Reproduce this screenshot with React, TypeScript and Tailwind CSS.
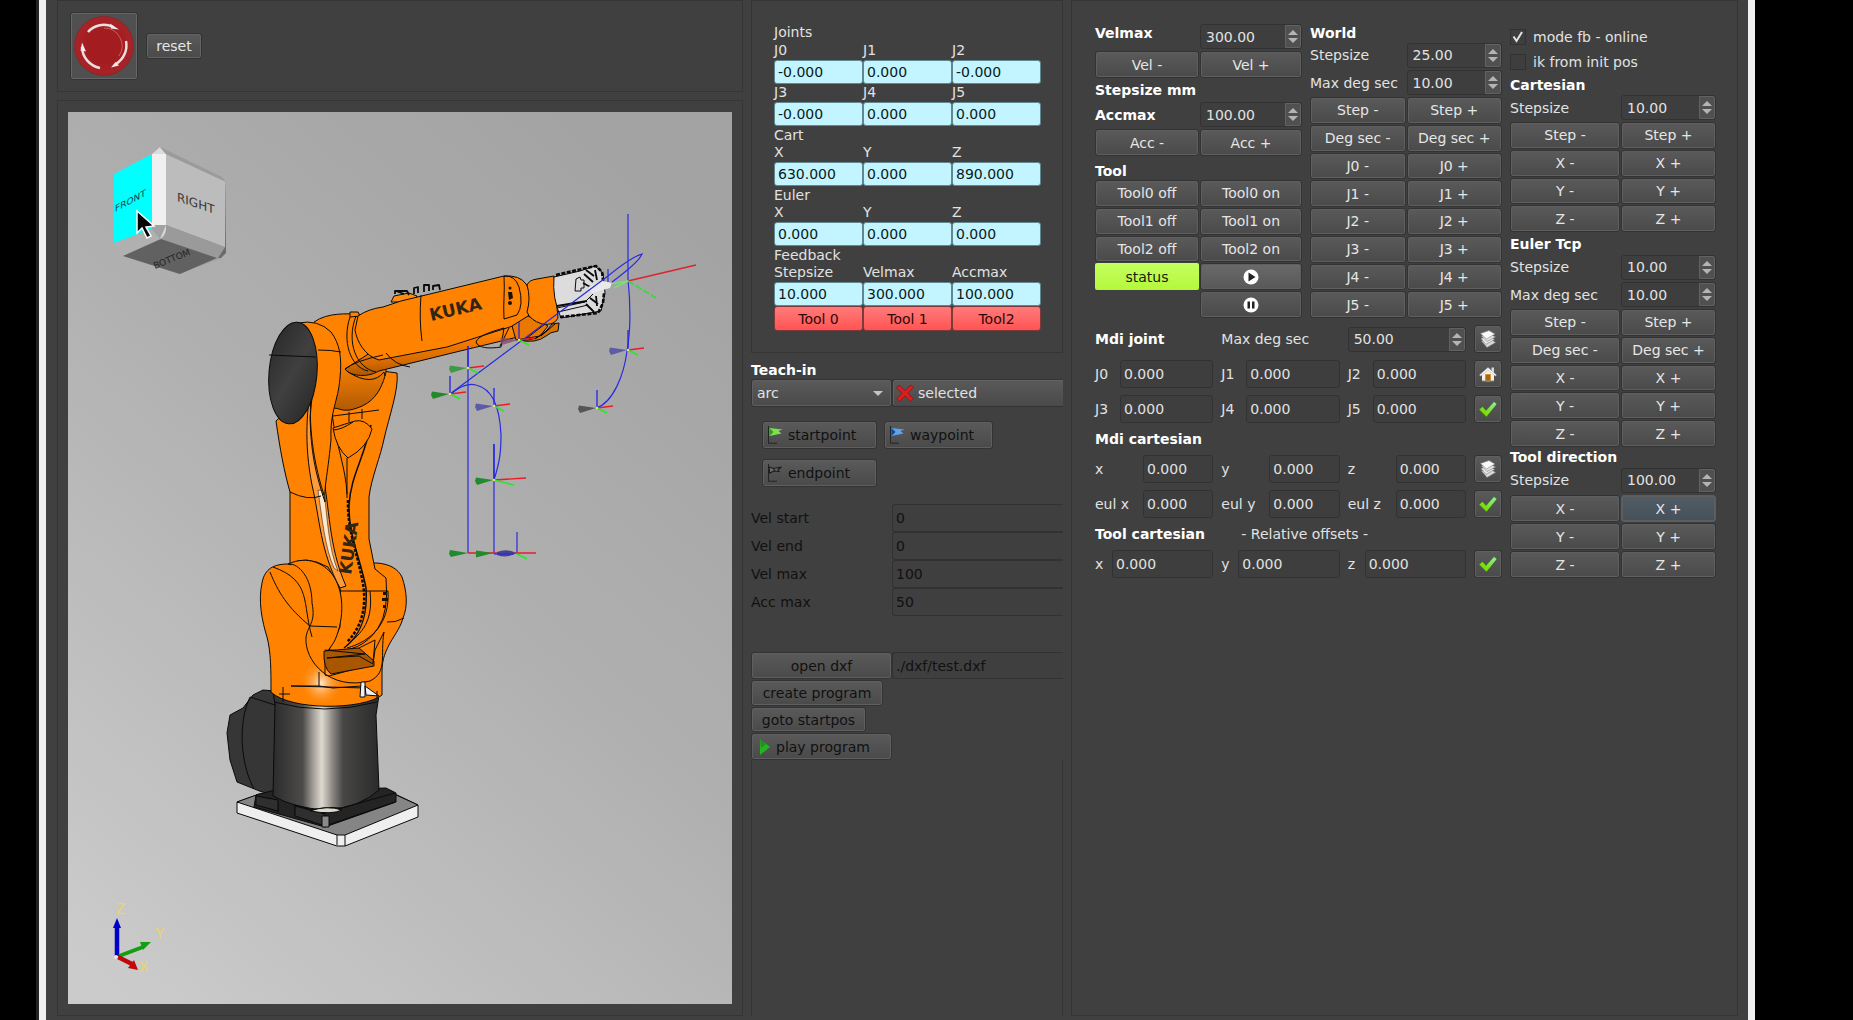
import type { ReactNode } from "react";

const btn =
  "flex w-full min-w-0 items-center justify-center whitespace-nowrap rounded-[3px] border border-[#333333] bg-linear-to-b from-[#5a5a5a] to-[#4a4a4a] leading-none shadow-[inset_0_0_0_1px_#5f5f5f]";
const field = "w-full min-w-0 rounded-[3px] border border-[#323232] bg-[#3e3e3e] leading-none outline-none";

function Btn({ children, className = "h-full text-[#e6e6e6]", label }: { children: ReactNode; className?: string; label?: string }) {
  return (
    <button type="button" aria-label={label} className={`${btn} ${className}`}>
      {children}
    </button>
  );
}

function Title({ children, className = "h-[18px]" }: { children: ReactNode; className?: string }) {
  return <h2 className={`flex items-center whitespace-nowrap font-bold text-white ${className}`}>{children}</h2>;
}

function Spin({ value, label }: { value: string; label: string }) {
  return (
    <div className="flex h-[25px] w-full min-w-0 rounded-[3px] border border-[#323232] bg-[#3e3e3e]">
      <input aria-label={label} defaultValue={value} className="w-full min-w-0 flex-1 bg-transparent pl-[5px] leading-none outline-none" />
      <div className="flex w-4 shrink-0 flex-col items-center justify-center gap-[3px] rounded-r-[2px] border border-[#626262] bg-[#505050]">
        <button type="button" aria-label={`Increase ${label}`} className="flex">
          <svg width="10" height="5" viewBox="0 0 10 5">
            <path d="M0 5 5 0l5 5z" fill="#b4b4b4" />
          </svg>
        </button>
        <button type="button" aria-label={`Decrease ${label}`} className="flex">
          <svg width="10" height="5" viewBox="0 0 10 5">
            <path d="M0 0h10L5 5z" fill="#b4b4b4" />
          </svg>
        </button>
      </div>
    </div>
  );
}

function Readouts({ labels, values }: { labels: string[]; values: string[] }) {
  return (
    <div className="grid grid-cols-3">
      {labels.map((l, i) => (
        <label key={l} className="block">
          <span className="block h-[18px] leading-[17px]">{l}</span>
          <input
            readOnly
            value={values[i]}
            className="block h-6 w-full min-w-0 rounded-[3px] border border-[#5f8890] bg-[#c2f5ff] pl-[3px] leading-none text-[#0b1a20] outline-none"
          />
        </label>
      ))}
    </div>
  );
}

function Labelled({ label, value, labelClass }: { label: string; value: string; labelClass: string }) {
  return (
    <label className="flex min-w-0 items-center">
      <span className={`shrink-0 whitespace-nowrap ${labelClass}`}>{label}</span>
      <input defaultValue={value} className={`${field} h-7 flex-1 pl-[3px]`} />
    </label>
  );
}

function Layers() {
  return (
    <svg width="18" height="18" viewBox="0 0 18 18">
      <g stroke="#7d7d7d" strokeWidth=".6" strokeLinejoin="round">
        <path d="M2.500 11 11 8.500l5.500 4-8.500 5z" fill="#dadada" />
        <path d="M2 8.500 10 6l5.500 3.500-8.500 5z" fill="#e8e8e8" />
        <path d="M2.500 6 11 4l5.500 3-8.500 4.500z" fill="#e2e2e2" />
        <path d="M1.500 3.500 10 .5l6 3.500-8.500 5z" fill="#f8f8f8" />
      </g>
    </svg>
  );
}
function Home() {
  return (
    <svg width="18" height="18" viewBox="0 0 18 18">
      <path d="M12.500 2.500h2.500v5h-2.500z" fill="#d8d8d8" />
      <path d="M3 8.500 9 4l6 4.500V16H3z" fill="#f1efea" />
      <path d="M6.500 9.500h5V16h-5z" fill="#a9650f" stroke="#d8912c" />
      <path d="M.5 10 9 2.500 17.500 10l-1.200 1L9 5l-7.300 6z" fill="#fafafa" stroke="#aaa" strokeWidth=".5" />
      <path d="M3 16h12" stroke="#888" />
    </svg>
  );
}
function Check() {
  return (
    <svg width="20" height="18" viewBox="0 0 20 18">
      <defs>
        <linearGradient id="chk" x1="0" y1="1" x2="1" y2="0">
          <stop offset=".3" stopColor="#7ddc08" />
          <stop offset=".8" stopColor="#8fe68f" />
        </linearGradient>
      </defs>
      <path d="M1 9.500 4.500 6.500l3.500 4L16 1.500l3 2.500L8.500 17z" fill="url(#chk)" stroke="#2f6f1a" strokeWidth=".6" />
    </svg>
  );
}
function Flag({ light, dark, disabled = false }: { light: string; dark: string; disabled?: boolean }) {
  return (
    <svg width="18" height="18" viewBox="0 0 18 18" className="shrink-0">
      <path d="M2.500 0v17M2 17.200h9" stroke="#242424" fill="none" />
      {disabled ? (
        <path d="M3 3l4.500 1.500 8-1.500-3.500 2.500 1 2-5-.5L3.500 9zM7 4l2 3" fill="#6a6a6a" stroke="#1c1c1c" strokeWidth="1.200" />
      ) : (
        <>
          <path d="M3.500 2 16.500 3.500l-4 1.500 3 2.500L3.500 10z" fill={light} />
          <path d="M3.500 2v8l4-4z" fill={dark} />
        </>
      )}
    </svg>
  );
}

function EmergencyStop() {
  return (
    <svg width="62" height="62" viewBox="0 0 62 62">
      <defs>
        <radialGradient id="stop">
          <stop offset=".7" stopColor="#a51f22" />
          <stop offset=".94" stopColor="#a82328" />
          <stop offset="1" stopColor="#7c2a2a" />
        </radialGradient>
      </defs>
      <circle cx="31" cy="31" r="30" fill="url(#stop)" />
      <circle cx="31" cy="31" r="18" fill="#a31c20" />
      <path d="M31 13a18 18 0 0 1 15 28" fill="none" stroke="#c9605f" strokeWidth="1" />
      <g fill="none" stroke="#ecdfdf" strokeWidth="2.500">
        <path d="M15 17a21 21 0 0 1 25-5" />
        <path d="M53 26a22 22 0 0 1-10 23" />
        <path d="M27 53A22 22 0 0 1 9 32" />
      </g>
      <g fill="#f5eaea">
        <path d="M46 14.500 37 8.500l1 5z" />
        <path d="M38 52.500l4.500-5.500 3.500 3.500z" />
        <path d="M9 27.500l4 9-5.500-1z" />
      </g>
    </svg>
  );
}

function Frame3({ x, y, c, s = 1, z = 22, o = 1 }: { x: number; y: number; c: string; s?: number; z?: number; o?: number }) {
  return (
    <g>
      <path d={`M${x} ${y}v${-z}`} stroke="#2222e8" strokeWidth="1.300" />
      <path d={`M${x} ${y}l${16 * s} -2`} stroke="#ea1c24" strokeWidth="1.400" />
      <path d={`M${x} ${y}l${10 * s} ${5}`} stroke="#25e825" strokeWidth="1.500" />
      <path d={`M${x - 1} ${y}l-17-2.500-1 3.500 2 4z`} fill={c} opacity={o} />
      <circle cx={x} cy={y} r="1.200" fill="#f3e85a" />
    </g>
  );
}

function RobotView() {
  return (
    <svg viewBox="68 112 664 892" className="block h-auto w-full" role="img" aria-label="Robot view" fontFamily="'DejaVu Sans', sans-serif">
      <defs>
        <linearGradient id="bg" x1=".1" y1="1" x2=".75" y2="0">
          <stop offset="0" stopColor="#cbcbcb" />
          <stop offset=".55" stopColor="#b0b0b0" />
          <stop offset="1" stopColor="#a3a3a3" />
        </linearGradient>
        <linearGradient id="cyl">
          <stop offset="0" stopColor="#2c2c2c" />
          <stop offset=".28" stopColor="#4d4b49" />
          <stop offset=".38" stopColor="#a39f98" />
          <stop offset=".46" stopColor="#dedad2" />
          <stop offset=".56" stopColor="#8c8984" />
          <stop offset=".66" stopColor="#484746" />
          <stop offset="1" stopColor="#2b2b2b" />
        </linearGradient>
        <linearGradient id="arm" x1="0" y1="0" x2=".12" y2="1">
          <stop offset=".6" stopColor="#ff8200" />
          <stop offset=".85" stopColor="#d96c00" />
          <stop offset="1" stopColor="#a95500" />
        </linearGradient>
        <linearGradient id="elbow" x1="0" y1="0" x2="0" y2="1">
          <stop offset=".5" stopColor="#ff8200" />
          <stop offset="1" stopColor="#b05a04" />
        </linearGradient>
        <linearGradient id="cap" x1="0" y1="0" x2="1" y2="1">
          <stop offset="0" stopColor="#272727" />
          <stop offset=".5" stopColor="#404040" />
          <stop offset="1" stopColor="#262626" />
        </linearGradient>
        <radialGradient id="shine">
          <stop offset="0" stopColor="#ffe9cf" />
          <stop offset="1" stopColor="#ff8200" stopOpacity="0" />
        </radialGradient>
      </defs>
      <rect x="68" y="112" width="664" height="892" fill="url(#bg)" />

      {/* orientation cube */}
      <g>
        <path d="M152 154l8-7 62 31 4 7v66l-6 8-42 15-54-18-10-15z" fill="#a2a2a2" />
        <path d="M114 174l38-20v75l-38 14z" fill="#00ffff" />
        <path d="M152 154h14v71h-14z" fill="#f0f0f0" />
        <path d="M152 154l8-7 6 7z" fill="#dcdcdc" />
        <path d="M166 154l59 27v66l-59-22z" fill="#bcbcbc" />
        <path d="M160 147l62 30 4 5-60-28z" fill="#9b9b9b" />
        <path d="M166 225l59 22-7 11-58-19z" fill="#9a9a9a" />
        <path d="M114 243l38-14 8 10-37 17z" fill="#b0b0b0" />
        <path d="M160 239l6-14q1 10-6 14z" fill="#d6d6d6" />
        <path d="M123 256l38-17 56 19-37 16z" fill="#616161" />
        <path d="M225 184v63l-7 11h3l5-5z" fill="#6b6b6b" />
        <text transform="translate(115 212) skewY(-28)" fontSize="9" fill="#12454a">FRONT</text>
        <text transform="translate(177 201) skewY(19)" fontSize="12" fill="#383838">RIGHT</text>
        <text transform="translate(155 269) rotate(-22)" fontSize="9" fill="#262626">BOTTOM</text>
        <path d="M137 211v22l5-5 5 10 4-2-5-9 8-1z" fill="#050505" stroke="#fff" strokeWidth="1.500" />
      </g>

      <g stroke="#0a0a0a" strokeWidth="1" strokeLinejoin="round">
        {/* base plate */}
        <path d="M237 802l20-7 140 0 21 10v12l-73 29h-8l-100-33z" fill="#efefef" />
        <path d="M237 802l22-8 135 0 24 11-73 30h-8z" fill="#858585" />
        <path d="M337 835v10M345 835v11" fill="none" />
        {/* connector box */}
        <path d="M275 691l-12-1-10 5-10 13-13 7-3 18 3 27 7 22 25 10 20 3z" fill="#363636" />
        <path d="M250 697c-12 25-10 66 4 92M250 697l25 8" fill="none" />
        {/* pedestal */}
        <path d="M256 795l15-4 115-3 10 5v9l-71 25-71-20z" fill="#242424" />
        <path d="M273 692q52 18 106 3l-3 20 3 75q-20 18-53 20-32-2-53-14l2-91z" fill="url(#cyl)" />
        <path d="M256 796l22 7v10M295 805l29 8v13M324 813l71-20M295 805v10l30 11 70-24M305 812q18-6 36-4" fill="none" />
        <path d="M256 796l22 4v11l-22-6z M295 806l30 8v12l-30-10z" fill="#2f2f2f" />
        <path d="M322 816h7v11h-7z" fill="#8a8a8a" />
        <path d="M310 811q17-6 32-1-10 5-32 1z" fill="#ddd9cf" />
        <path d="M274 702q50 14 103 0" fill="none" />
        {/* shoulder */}
        <path d="M288 564c-18 0-24 8-26 19-4 18 0 38 5 54 4 15 4 34 4 55 20 19 92 18 111 3v-23c0-14 4-21 8-29 6-10 11-17 13-25 5-12 4-26-1-41-4-8-12-13-25-14z" fill="#ff8200" />
        <ellipse cx="321" cy="683" rx="22" ry="24" fill="url(#shine)" stroke="none" />
        {/* lower arm */}
        <path d="M276 421c4 28 8 50 14 71v73q14-11 38 2l12 22v38l-11 23q32 4 49-22 11-16 8-50l-11-9-6-30v-42c2-18 12-42 15-58 5-22 15-50 13-66l-60-8z" fill="#ff8200" />
        <path d="M340 591h48M340 589q2 40-12 61M388 591c2 32-16 50-41 57M370 591c4 35-12 44-26 57" fill="none" />
        <path d="M288 564c20-9 36 0 44 10 12 16 13 43 3 66-4 8-10 12-10 20v15l4 1 44-12 2-14 9-18c-4 24 4 40-14 49-40 10-66-20-64-44 2-12 10-14 6-34 0-25-13-40-24-39z" fill="#ff8200" />
        <path d="M312 637c-10-34 0-56-39-70M270 572c8 20 18 36 40 54l27 1M404 618q-9 5-17 4" fill="none" />
        <path d="M324 651l35-3 15 13v5l-43 8q-8-6-7-23z" fill="#a95600" />
        <path d="M325 650l40 4-38 4 32-2 14 8M359 648l16-8-2 23M319 672v14l14 2 28-2M319 686h-28l74 2" fill="none" />
        <path d="M361 682h4v15h-5zM365 686l14 10-13-1z" fill="#f0f0f0" />
        <path d="M283 687v15M279 694h11M377 691v7" fill="none" />
        {/* inner strip */}
        <path d="M314 375c-8 30-10 70-2 110 8 34 8 66 28 103l6-2c-18-40-16-80-24-115-8-33-8-64-1-90z" fill="#ff9b38" />
        <path d="M318 490l6 1c3 25 5 60 14 80l-4-3c-9-20-12-50-16-78z" fill="#ffe7cc" strokeWidth=".5" />
        <path d="M290 492q18 9 31 4M331 408c2 30-10 60-8 88M332 414c4 30 14 55 15 80M347 458v40" fill="none" />
        <path d="M371 425c-8 36-20 50-22 80-1 30 12 55 17 83 2 30-6 48-22 60" fill="none" strokeWidth="1.500" />
        <path d="M348 500c-1 30 10 55 15 84 4 24-2 44-16 58" fill="none" strokeWidth="2.500" strokeDasharray="3 1.500" />
        <path d="M333 416l46-6M333 428q12-4 22-7 10-2 17 8-4 18-24 29-12-10-15-30z" fill="#ff8200" />
        <path d="M349 412v10M362 409v10M333 430q8 0 20-8" fill="none" />
        {/* elbow */}
        <path d="M314 322c14-10 34-8 45-8l26 20 1 38c-6 25-18 34-36 38-10 1-10-2-18-2z" fill="url(#elbow)" />
        <path d="M298 323q20-4 33 9c9 12 11 26 9 46-2 24-10 32-9 62-4 40-7 46-6 62-10-30-14-50-15-84 4-40 6-60-2-82z" fill="#ff8200" />
        <path d="M318 350q14 0 23 2M312 385c-4 30-1 70 12 110" fill="none" />
        <ellipse cx="293" cy="373" rx="24" ry="51" transform="rotate(5 293 373)" fill="url(#cap)" />
        <path d="M269 355l47 2" fill="none" />
        {/* upper arm */}
        <path d="M345 369c4 6 20 10 34 2l73-18 70-17 20-6-18-42-95 27z" fill="url(#arm)" />
        <path d="M350 312h8l2 4-10 1z" fill="#ff8200" />
        <path d="M391 302l3-6 15-3 8 3-3 6z" fill="#ff8c12" />
        <path d="M395 294v-3h12l2 4M396 291l8 3M414 294v-6l4-1v6M424 292v-7h5v6M433 290v-4l6-1 1 5" fill="none" strokeWidth="1.800" />
        <path d="M358 316q10-7 25-9l18-6 103-25q16-1 22 8 8 10 6 24-3 12-16 17l-69 22-68 13c-14-4-22-18-24-30z" fill="#ff8200" />
        <path d="M421 295q-2 25 1 46M504 276c1 16-1 27 0 43l13-4q7-10 2-28-4-12-15-11zM356 316c-10 26 0 52 20 56M350 317c-8 24 0 50 18 54M345 369q10-8 38-14M386 353q9 12 24 14M348 372q24 15 36 0l1 4" fill="none" />
        <path d="M504 328c-14 4-26 8-28 14 2 6 12 7 25 5zM509 328l-9 18" fill="none" />
        <path d="M512 326l16-10 20 10-8 10-24 4z" fill="#e97800" />
        {/* wrist */}
        <path d="M518 340q20 2 30-11l4-5 7-1-1 8q-8 1-12 5-10 8-28 4z" fill="#d97402" />
        <path d="M527 338l18-14M535 339l14-10M541 336l14-12" fill="none" />
        <path d="M527 285q2-5 10-6l17-3 4 42q-4 8-16 6-12-4-15-12 4-14 0-27z" fill="#ff8200" />
        <path d="M554 277l26-6 15-5 8 7 2 20-4 18-40 7q-9-20-7-41z" fill="#dcdcdc" />
        <path d="M576 279l-1 12h6v-3h3v-8h-3l-1-3zM557 308l28-6 8-8M558 312l30-7" fill="none" />
        <path d="M556 275l26-6 14-3 6 6 1 8" fill="none" strokeWidth="2.600" strokeDasharray="4 1.500" />
        <path d="M560 317l38-4 5-10 1-10" fill="none" strokeWidth="2.600" strokeDasharray="4 1.500" />
        <path d="M557 306l30-5M586 270l8 6M584 274l9 8M595 270l2 10M596 296l1 10M586 304l8 8M590 298l8 6M583 283l9 5" fill="none" strokeWidth="1.800" />
        <path d="M588 287l15-6 9 2-2 5-18 5z" fill="#e9e9e9" stroke="none" />
      </g>
      <text transform="translate(431 321) rotate(-13)" fontSize="17" fontWeight="bold" fill="#332414">KUKA</text>
      <text transform="translate(351 575) rotate(-82)" fontSize="17" fontWeight="bold" fill="#332414">KUKA</text>
      <g fill="#1a1206">
        <circle cx="510" cy="288" r="1.500" />
        <path d="M508 292h4l1 6-4 2z" />
        <circle cx="510" cy="303" r="2" />
        <path d="M383 592h3v3h-3zM382 598h6v3h-6zM383 605h3v3h-3z" />
      </g>

      {/* taught path */}
      <g fill="none" stroke="#2a2ae0" strokeWidth="1.200">
        <path d="M468 346v207M494 444v109M517 532v21" />
        <path d="M450 395q14-13 26-10c18 4 24 26 25 50 0 16-1 26-7 45" />
        <path d="M450 394 608 276q22-18 34-22-3 8-30 28M628 214v65c3 30 3 50-1 72-3 24-14 52-31 57M608 282v-13" />
      </g>
      <path d="M628 281l68-16" stroke="#dc2430" strokeWidth="1.500" />
      <path d="M628 281l28 17" stroke="#2be32b" strokeWidth="1.500" strokeDasharray="7 2" />
      <path d="M611 284l17-3-14 7" stroke="#79e079" strokeWidth="1.500" fill="none" />
      <Frame3 x={468} y={368} c="#3f9a48" z={22} />
      <Frame3 x={450} y={394} c="#228a2c" z={18} />
      <Frame3 x={519} y={340} c="#8a4a6c" z={18} o={0.8} />
      <Frame3 x={494} y={406} c="#5b5ba8" z={18} />
      <Frame3 x={494} y={480} c="#228a2c" z={36} s={2} />
      <Frame3 x={628} y={350} c="#5b5ba8" z={20} />
      <Frame3 x={597} y={408} c="#555555" z={18} />
      <path d="M468 553h68" stroke="#e0202a" strokeWidth="1.400" />
      <path d="M517 554l10 5" stroke="#25e825" strokeWidth="1.500" />
      <path d="M493 553l-17-2.500v7zM468 553l-18-3-1 4 2 3z" fill="#228a2c" />
      <path d="M497 552q10-4 19 1-9 6-19 2z" fill="#44448f" />
      <path d="M494 554h20" stroke="#2a2ae0" strokeWidth="1.200" />

      {/* axis triad */}
      <g>
        <path d="M117 956v-30" stroke="#0000c8" strokeWidth="4.500" />
        <path d="M113 928l4-10 4 10z" fill="#0000c8" />
        <path d="M119 956l24-9" stroke="#12a012" strokeWidth="4" />
        <path d="M140 942l11 0-8 8z" fill="#12a012" />
        <path d="M118 957l14 7" stroke="#c00808" strokeWidth="4.500" />
        <path d="M128 968l6-8 4 10z" fill="#c00808" />
        <circle cx="116" cy="957" r="2" fill="#f0e4e4" />
        <g fontFamily="'Liberation Mono', monospace" fontSize="16" fill="#ead46c">
          <text x="116" y="914">Z</text>
          <text x="155" y="939">Y</text>
          <text x="139" y="972">X</text>
        </g>
      </g>
    </svg>
  );
}

function Pairs({ names, className }: { names: string[]; className: string }) {
  return (
    <div className={`grid auto-rows-fr gap-px ${className}`}>
      {names.flatMap((n) => [
        <Btn key={`${n}-`}>{n} -</Btn>,
        <Btn
          key={`${n}+`}
          className={
            n === "X" && names.length === 3
              ? "h-full border-[#2f6a8c]! from-[#515c65]! to-[#45515a]! text-[#e6e6e6]"
              : "h-full text-[#e6e6e6]"
          }
        >
          {n} +
        </Btn>,
      ])}
    </div>
  );
}

function SpinRow({ label, value, name, className }: { label: string; value: string; name: string; className: string }) {
  return (
    <div className={`grid items-center gap-px pb-[2px] ${className}`}>
      <span className="whitespace-nowrap">{label}</span>
      <Spin value={value} label={name} />
    </div>
  );
}

const params = [
  ["Vel start", "0"],
  ["Vel end", "0"],
  ["Vel max", "100"],
  ["Acc max", "50"],
];

export default function App() {
  return (
    <div className="flex min-h-screen bg-black pl-9 pr-[98px] font-['DejaVu_Sans',sans-serif] text-[14px] leading-[18px] text-[#e2e2e2]">
      <main className="flex min-w-0 flex-1 border-l-[3px] border-[#242424]">
        <div className="flex min-w-0 flex-1 gap-2 border-x-[7px] border-[#f0f0f2] bg-[#404040] pr-[10px] pb-1 pl-[11px]">
          {/* robot column */}
          <div className="flex min-w-0 flex-1 flex-col gap-2">
            <header className="flex h-[92px] items-center gap-2 border border-[#353535] px-3">
              <button
                type="button"
                aria-label="Emergency stop"
                className="flex size-[68px] items-center justify-center rounded-[3px] border border-[#333333] bg-[#505050] shadow-[inset_0_0_0_1px_#666666]"
              >
                <EmergencyStop />
              </button>
              <button type="button" className="h-[26px] w-[56px] rounded-[3px] border border-[#333333] bg-linear-to-b from-[#5a5a5a] to-[#4a4a4a] leading-none text-[#e6e6e6] shadow-[inset_0_0_0_1px_#636363]">
                reset
              </button>
            </header>
            <section className="flex-1 border border-[#353535] px-[10px] pt-[11px] pb-[10px]">
              <RobotView />
            </section>
          </div>

          {/* readout and teach-in column */}
          <div className="flex w-[312px] shrink-0 flex-col">
            <section className="border border-[#353535] pt-[23px] pr-[21px] pb-[21px] pl-[22px]">
              <h2 className="h-[18px] leading-[17px]">Joints</h2>
              <Readouts labels={["J0", "J1", "J2"]} values={["-0.000", "0.000", "-0.000"]} />
              <Readouts labels={["J3", "J4", "J5"]} values={["-0.000", "0.000", "0.000"]} />
              <h2>Cart</h2>
              <Readouts labels={["X", "Y", "Z"]} values={["630.000", "0.000", "890.000"]} />
              <h2>Euler</h2>
              <Readouts labels={["X", "Y", "Z"]} values={["0.000", "0.000", "0.000"]} />
              <h2>Feedback</h2>
              <Readouts labels={["Stepsize", "Velmax", "Accmax"]} values={["10.000", "300.000", "100.000"]} />
              <div className="grid grid-cols-3">
                {["Tool 0", "Tool 1", "Tool2"].map((t) => (
                  <button key={t} type="button" className="h-[25px] rounded-[3px] border border-[#7c3a3a] bg-linear-to-b from-[#ff7a7a] to-[#ff5353] leading-none text-[#2c0808]">
                    {t}
                  </button>
                ))}
              </div>
            </section>

            <section className="flex flex-col pt-2 text-[#111111]">
              <Title>Teach-in</Title>
              <div className="flex">
                <div className="relative w-[141px] shrink-0">
                  <select aria-label="Path type" className={`${btn} h-7 appearance-none pl-[5px] text-[#e2e2e2]`}>
                    <option>arc</option>
                  </select>
                  <svg width="10" height="5" viewBox="0 0 10 5" className="pointer-events-none absolute top-3 right-[9px]">
                    <path d="M0 0h10L5 5z" fill="#c4c4c4" />
                  </svg>
                </div>
                <button type="button" className="flex h-7 flex-1 items-center gap-1 rounded-l-[3px] border border-r-0 border-[#333333] bg-linear-to-b from-[#5a5a5a] to-[#4a4a4a] pl-[3px] leading-none text-[#e2e2e2] shadow-[inset_1px_1px_0_#636363]">
                  <svg width="18" height="18" viewBox="0 0 18 18">
                    <path d="M3 1l6 5.500L15 1l2.500 2.500L12 9l5.500 6-3 2.500L9 12l-5.500 5.500L1 14.500 6 9 .5 4z" fill="#d81f1f" stroke="#8c1010" strokeWidth=".7" />
                  </svg>
                  selected
                </button>
              </div>
              <div className="flex flex-wrap gap-x-[7px] gap-y-[10px] pt-[14px] pl-[11px]">
                <Btn className="h-7 w-[115px]! justify-start! gap-1 pl-[3px]">
                  <Flag light="#7ee04c" dark="#2f9a24" />
                  startpoint
                </Btn>
                <Btn className="h-7 w-[109px]! justify-start! gap-1 pl-[3px]">
                  <Flag light="#5fa2ee" dark="#17458e" />
                  waypoint
                </Btn>
                <Btn className="h-7 w-[115px]! justify-start! gap-1 pl-[3px]">
                  <Flag light="#3a3a3a" dark="#6a6a6a" disabled />
                  endpoint
                </Btn>
              </div>
              <div className="pt-[17px]">
                {params.map(([l, v]) => (
                  <label key={l} className="flex h-7 items-center">
                    <span className="w-[141px] shrink-0">{l}</span>
                    <input disabled defaultValue={v} className="h-7 min-w-0 flex-1 rounded-l-[3px] border border-r-0 border-[#323232] bg-[#3f3f3f] pl-[3px] leading-none" />
                  </label>
                ))}
              </div>
              <div className="flex pt-9">
                <Btn className="h-[27px] w-[141px]! shrink-0">open dxf</Btn>
                <input disabled aria-label="DXF file" defaultValue="./dxf/test.dxf" className="h-[27px] min-w-0 flex-1 rounded-l-[3px] border border-r-0 border-[#323232] bg-[#3f3f3f] pl-[3px] leading-none" />
              </div>
              <div className="flex flex-col gap-px pt-px">
                <Btn className="h-[26px] w-[132px]!">create program</Btn>
                <Btn className="h-[25px] w-[115px]!">goto startpos</Btn>
                <Btn className="h-[27px] w-[141px]! justify-start! gap-[6px] pl-2">
                  <svg width="10" height="16" viewBox="0 0 10 16">
                    <path d="M0 0 10 8 0 16z" fill="#22b51e" />
                    <path d="M0 0 6 5 1 9z" fill="#2a8a28" />
                  </svg>
                  play program
                </Btn>
              </div>
            </section>
            <div className="flex-1 border-x border-[#353535]" />
          </div>

          {/* control column */}
          <section className="grid w-[667px] shrink-0 grid-cols-[407fr_206fr] content-start gap-2 border border-[#353535] pt-[23px] pr-[21px] pl-[23px]">
            <div className="min-w-0">
              <div className="grid grid-cols-[207fr_192fr] gap-2">
                <div className="min-w-0">
                  <div className="grid h-[27px] grid-cols-[104fr_102fr] gap-px">
                    <Title className="h-[17px]">Velmax</Title>
                    <Spin value="300.00" label="Velmax" />
                  </div>
                  <div className="grid h-[27px] grid-cols-[104fr_102fr] gap-px">
                    <Btn>Vel -</Btn>
                    <Btn>Vel +</Btn>
                  </div>
                  <Title className="h-6">Stepsize mm</Title>
                  <div className="grid h-[27px] grid-cols-[104fr_102fr] items-center gap-px pb-[2px]">
                    <Title>Accmax</Title>
                    <Spin value="100.00" label="Accmax" />
                  </div>
                  <div className="grid h-[27px] grid-cols-[104fr_102fr] gap-px">
                    <Btn>Acc -</Btn>
                    <Btn>Acc +</Btn>
                  </div>
                  <Title className="h-6 pt-[5px]">Tool</Title>
                  <div className="grid h-[138px] auto-rows-fr grid-cols-[104fr_102fr] gap-px">
                    {["Tool0", "Tool1", "Tool2"].flatMap((t) => [<Btn key={`${t}f`}>{t} off</Btn>, <Btn key={`${t}n`}>{t} on</Btn>])}
                    <button type="button" className="rounded-[2px] bg-linear-to-b from-[#c4ff5c] to-[#b4f83c] leading-none text-[#16200a]">
                      status
                    </button>
                    <Btn label="Play" className="h-full from-[#6a6a6a]! to-[#585858]!">
                      <svg width="16" height="16" viewBox="0 0 16 16">
                        <circle cx="8" cy="8" r="7.500" fill="#fff" />
                        <path d="M5.500 3.500 12.500 8l-7 4.500z" fill="#222" />
                      </svg>
                    </Btn>
                    <Btn label="Pause" className="col-start-2 h-full">
                      <svg width="16" height="16" viewBox="0 0 16 16">
                        <circle cx="8" cy="8" r="7.500" fill="#fff" />
                        <path d="M4.500 4.500h2.500v7H4.500zM9 4.500h2.500v7H9z" fill="#222" />
                      </svg>
                    </Btn>
                  </div>
                </div>
                <div className="min-w-0">
                  <Title>World</Title>
                  <SpinRow label="Stepsize" value="25.00" name="World stepsize" className="h-7 grid-cols-2" />
                  <SpinRow label="Max deg sec" value="10.00" name="World max deg sec" className="h-[27px] grid-cols-2" />
                  <Pairs names={["Step", "Deg sec", "J0", "J1", "J2", "J3", "J4", "J5"]} className="h-[221px] grid-cols-2" />
                </div>
              </div>

              <div className="grid grid-cols-[1fr_1fr_1fr_28px] items-center gap-x-2 gap-y-[7px] pt-[7px]">
                <Title>Mdi joint</Title>
                <span className="whitespace-nowrap">Max deg sec</span>
                <Spin value="50.00" label="Joint max deg sec" />
                <Btn label="Copy joint position" className="h-7"><Layers /></Btn>
                <Labelled label="J0" value="0.000" labelClass="w-[25px]" />
                <Labelled label="J1" value="0.000" labelClass="w-[25px]" />
                <Labelled label="J2" value="0.000" labelClass="w-[25px]" />
                <Btn label="Home" className="h-7"><Home /></Btn>
                <Labelled label="J3" value="0.000" labelClass="w-[25px]" />
                <Labelled label="J4" value="0.000" labelClass="w-[25px]" />
                <Labelled label="J5" value="0.000" labelClass="w-[25px]" />
                <Btn label="Run joint move" className="h-7"><Check /></Btn>
                <Title className="col-span-4 h-[18px]">Mdi cartesian</Title>
                <Labelled label="x" value="0.000" labelClass="w-12" />
                <Labelled label="y" value="0.000" labelClass="w-12" />
                <Labelled label="z" value="0.000" labelClass="w-12" />
                <Btn label="Copy cartesian position" className="h-7"><Layers /></Btn>
                <Labelled label="eul x" value="0.000" labelClass="w-12" />
                <Labelled label="eul y" value="0.000" labelClass="w-12" />
                <Labelled label="eul z" value="0.000" labelClass="w-12" />
                <Btn label="Run cartesian move" className="h-7"><Check /></Btn>
                <Title>Tool cartesian</Title>
                <span className="col-span-3 pl-5">- Relative offsets -</span>
                <Labelled label="x" value="0.000" labelClass="w-[17px]" />
                <Labelled label="y" value="0.000" labelClass="w-[17px]" />
                <Labelled label="z" value="0.000" labelClass="w-[17px]" />
                <Btn label="Run tool move" className="h-7"><Check /></Btn>
              </div>
            </div>

            <div className="min-w-0">
              {[
                ["mode fb - online", true],
                ["ik from init pos", false],
              ].map(([l, on]) => (
                <label key={String(l)} className="flex h-[25px] items-center gap-[7px]">
                  <span className="relative flex size-4">
                    <input type="checkbox" defaultChecked={Boolean(on)} className="peer size-4 appearance-none border border-[#323232] bg-[#3e3e3e]" />
                    <svg width="16" height="16" viewBox="0 0 16 16" className="pointer-events-none absolute inset-0 hidden peer-checked:block">
                      <path d="M3.500 7.500 6.500 12l5.500-9" fill="none" stroke="#e4e4e4" strokeWidth="2" />
                    </svg>
                  </span>
                  {l}
                </label>
              ))}
              <Title className="h-[21px]">Cartesian</Title>
              <SpinRow label="Stepsize" value="10.00" name="Cartesian stepsize" className="h-[27px] grid-cols-[110fr_95fr]" />
              <Pairs names={["Step", "X", "Y", "Z"]} className="h-[110px] grid-cols-[110fr_95fr]" />
              <Title className="h-[22px] pt-[2px]">Euler Tcp</Title>
              <SpinRow label="Stepsize" value="10.00" name="Euler stepsize" className="h-7 grid-cols-[110fr_95fr]" />
              <SpinRow label="Max deg sec" value="10.00" name="Euler max deg sec" className="h-[27px] grid-cols-[110fr_95fr]" />
              <Pairs names={["Step", "Deg sec", "X", "Y", "Z"]} className="h-[138px] grid-cols-[110fr_95fr]" />
              <Title className="h-5">Tool direction</Title>
              <SpinRow label="Stepsize" value="100.00" name="Tool stepsize" className="h-7 grid-cols-[110fr_95fr]" />
              <Pairs names={["X", "Y", "Z"]} className="h-[83px] grid-cols-[110fr_95fr]" />
            </div>
          </section>
        </div>
      </main>
    </div>
  );
}
